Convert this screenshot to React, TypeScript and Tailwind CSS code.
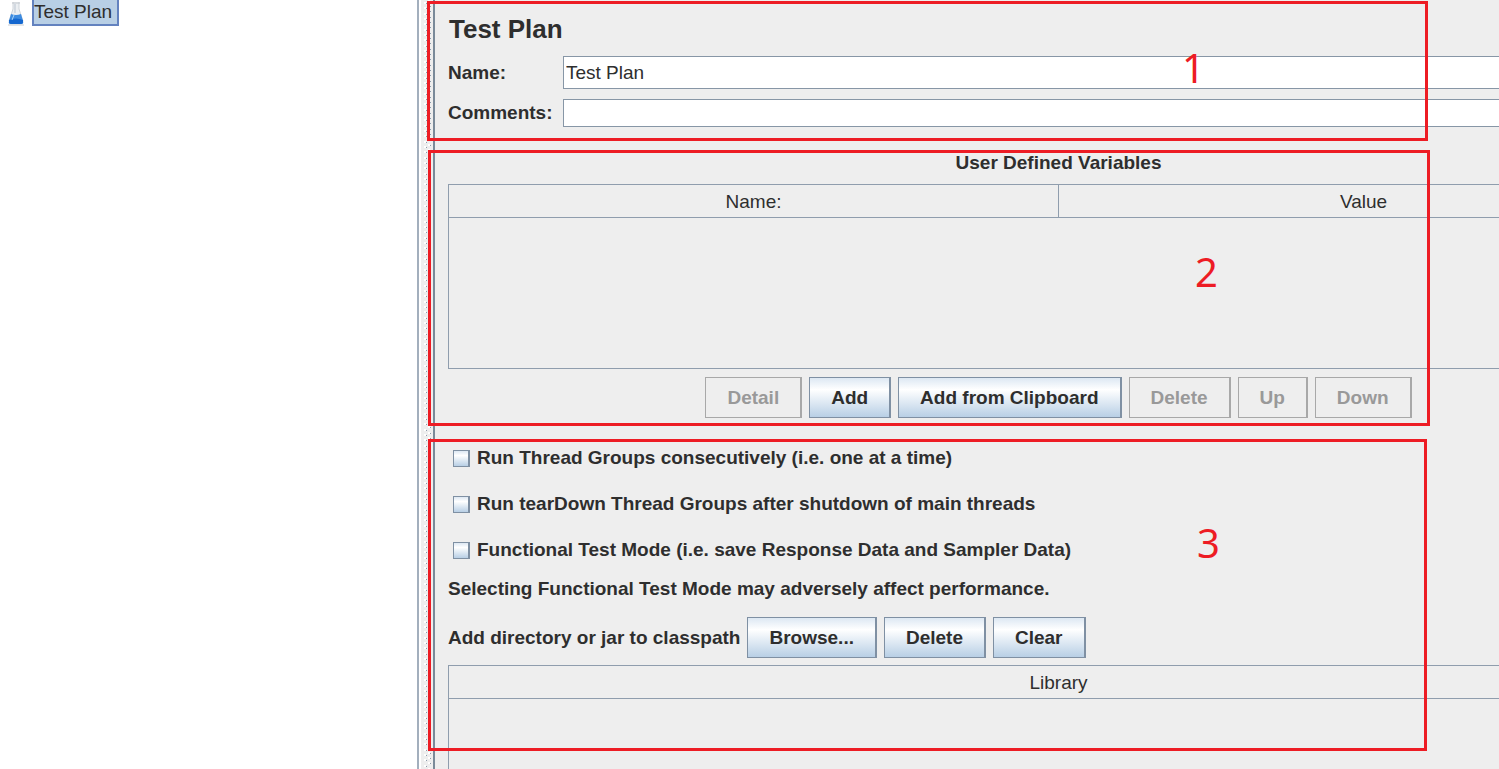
import type { ReactNode } from "react";

const variableActions = [
  { label: "Detail", enabled: false },
  { label: "Add", enabled: true },
  { label: "Add from Clipboard", enabled: true },
  { label: "Delete", enabled: false },
  { label: "Up", enabled: false },
  { label: "Down", enabled: false },
];

const options = [
  { id: "serialize", label: "Run Thread Groups consecutively (i.e. one at a time)" },
  { id: "teardown", label: "Run tearDown Thread Groups after shutdown of main threads" },
  { id: "functional", label: "Functional Test Mode (i.e. save Response Data and Sampler Data)" },
];

function FlaskIcon() {
  return (
    <svg aria-hidden="true" className="h-[26px] w-5" viewBox="0 0 20 26">
      <path d="M7 2h6v7l4 13q1 3-2 3H5q-3 0-2-3L7 9z" fill="#eceff2" />
      <path d="M7 2v7L3 21M13 2v7l4 12" fill="none" stroke="#cfd4da" strokeWidth="1" />
      <path d="M6 3h8" stroke="#c2c7cd" strokeWidth="1" />
      <path d="M9 4v9" stroke="#b9c3cf" strokeWidth="1" />
      <path d="M5 14q5 2 10 0l2 7q1 3-2 3H5q-3 0-2-3z" fill="#3d8be0" />
      <path d="M3 20q7-3 14 0v2q0 2-2 2H5q-2 0-2-2z" fill="#1467cf" />
      <path d="M8 15l-2 5" stroke="#a5d2f8" strokeWidth="1" />
      <path d="M2 25h16" stroke="#c8ccd2" strokeWidth="1" />
    </svg>
  );
}

function MetalButton({ children, disabled }: { children: ReactNode; disabled?: boolean }) {
  return (
    <button
      className="h-[41px] border border-r-2 border-[#7f90a3] bg-linear-to-b from-[#dde8f3] via-white via-30% to-[#b8cfe5] px-[21px] font-bold disabled:border-[#a8a8a8] disabled:bg-none disabled:text-[#999999]"
      disabled={disabled}
      type="button"
    >
      {children}
    </button>
  );
}

function Splitter() {
  return (
    <div className="flex w-[18px] shrink-0 border-r-2 border-l-2 border-r-[#7a8a99] border-l-[#a3afbd] bg-[#eeeeee]">
      <div className="w-0.5 bg-white" />
      <svg aria-hidden="true" className="ml-[3px] h-full w-2">
        <defs>
          <pattern height="16" id="bumps" patternUnits="userSpaceOnUse" width="8" y="2">
            <path d="M0 0h2v2H0zM0 5h2v2H0zM0 11h2v2H0zM4 3h2v2H4zM4 8h2v2H4zM4 14h2v2H4z" fill="#ffffff" />
            <path d="M2 1h1v1H2zM2 6h1v1H2zM2 12h1v1H2zM6 4h1v1H6zM6 9h1v1H6zM6 15h1v1H6z" fill="#8b9aaa" />
          </pattern>
        </defs>
        <rect fill="url(#bumps)" height="100%" width="8" />
      </svg>
    </div>
  );
}

function Annotations() {
  return (
    <div className="pointer-events-none absolute inset-0 font-['Noto_Sans',sans-serif] text-[40px] leading-10 text-[#ed1c24]">
      <div className="absolute top-px right-[71px] left-[427px] h-[140px] border-3 border-[#ed1c24]">
        <span className="absolute top-11 right-[220px]">1</span>
      </div>
      <div className="absolute top-[150px] right-[69px] left-[428px] h-[276px] border-3 border-[#ed1c24]">
        <span className="absolute top-[99px] right-[209px]">2</span>
      </div>
      <div className="absolute top-[439px] right-[72px] left-[428px] h-[312px] border-3 border-[#ed1c24]">
        <span className="absolute top-[81px] right-[204px]">3</span>
      </div>
    </div>
  );
}

export default function App() {
  return (
    <div className="relative flex min-h-screen overflow-hidden bg-[#eeeeee] font-['Liberation_Sans',Arial,sans-serif] text-[19px] leading-6 text-[#2e2e2e]">
      <nav aria-label="Test tree" className="w-[417px] shrink-0 bg-white pl-1.5">
        <a className="flex items-start gap-1.5" href="#test-plan">
          <FlaskIcon />
          <span className="border-2 border-t-0 border-[#6382bf] bg-[#b8cfe5] pr-[5px] leading-6">Test Plan</span>
        </a>
      </nav>
      <Splitter />

      <main className="flex min-w-0 flex-1 flex-col pl-[13px]">
        {/* the form is wider than the viewport and runs off its right edge */}
        <div className="-mr-[170px] flex flex-1 flex-col">
          <section>
            <h1 className="pt-3.5 pl-px text-[26px] leading-[30px] font-bold">Test Plan</h1>
            <div className="mt-3 flex items-center">
              <label className="w-[115px] font-bold" htmlFor="plan-name">
                Name:
              </label>
              <input
                className="h-[33px] min-w-0 flex-1 border border-[#8796a6] bg-white px-0.5 outline-none"
                defaultValue="Test Plan"
                id="plan-name"
                type="text"
              />
            </div>
            <div className="mt-2.5 flex items-center">
              <label className="w-[115px] font-bold" htmlFor="plan-comments">
                Comments:
              </label>
              <input
                className="h-7 min-w-0 flex-1 border border-[#8796a6] bg-white px-0.5 outline-none"
                id="plan-comments"
                type="text"
              />
            </div>
          </section>

          <section className="mt-6">
            <h2 className="text-center font-bold">User Defined Variables</h2>
            <div className="mt-[9px] h-[185px] border border-[#8f9dad]">
              <table className="w-full table-fixed border-collapse">
                <thead>
                  <tr className="h-8 border-b border-[#8f9dad]">
                    <th className="border-r border-[#8f9dad] pt-0.5 font-normal">Name:</th>
                    <th className="pt-0.5 font-normal">Value</th>
                  </tr>
                </thead>
                <tbody />
              </table>
            </div>
            <div className="mt-2 flex justify-center gap-[7px]">
              {variableActions.map((action) => (
                <MetalButton disabled={!action.enabled} key={action.label}>
                  {action.label}
                </MetalButton>
              ))}
            </div>
          </section>

          <section className="mt-7 flex flex-1 flex-col">
            <div className="flex flex-col gap-[22px] pl-[5px]">
              {options.map((option) => (
                <div className="flex items-center gap-[7px]" key={option.id}>
                  <input
                    className="size-[17px] appearance-none border border-r-2 border-[#7f90a3] bg-linear-to-b from-[#dde8f3] via-white via-30% to-[#b8cfe5]"
                    id={option.id}
                    type="checkbox"
                  />
                  <label className="font-bold" htmlFor={option.id}>
                    {option.label}
                  </label>
                </div>
              ))}
            </div>
            <p className="mt-[15px] font-bold">Selecting Functional Test Mode may adversely affect performance.</p>
            <div className="mt-4 flex items-center gap-[7px]">
              <span className="font-bold">Add directory or jar to classpath</span>
              <MetalButton>Browse...</MetalButton>
              <MetalButton>Delete</MetalButton>
              <MetalButton>Clear</MetalButton>
            </div>
            <div className="mt-[7px] min-h-[104px] flex-1 border border-b-0 border-[#8f9dad]">
              <table className="w-full border-collapse">
                <thead>
                  <tr className="h-8 border-b border-[#8f9dad]">
                    <th className="pt-0.5 font-normal">Library</th>
                  </tr>
                </thead>
                <tbody />
              </table>
            </div>
          </section>
        </div>
      </main>

      <Annotations />
    </div>
  );
}
